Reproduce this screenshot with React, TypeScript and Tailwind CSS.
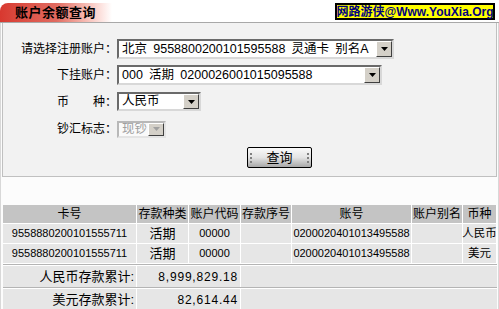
import React from 'react';

function DropArrow({ disabled }: { disabled?: boolean }) {
  return (
    <div className="flex h-full w-[16px] shrink-0 items-center justify-center border border-t-white border-l-white border-b-[#404040] border-r-[#404040] bg-[#d4d0c8]">
      <svg width="7" height="4" viewBox="0 0 7 4">
        <path d="M0 0h7L3.5 4z" fill={disabled ? '#a0a0a0' : '#000'} />
      </svg>
    </div>
  );
}

function FakeSelect({ text, className, disabled }: { text: string; className: string; disabled?: boolean }) {
  return (
    <div
      className={`flex items-stretch border-2 ${
        disabled
          ? 'border-t-[#b8b8b8] border-l-[#b8b8b8] border-b-[#e4e4e4] border-r-[#e4e4e4] bg-[#fafafa] text-[#a0a0a0]'
          : 'border-t-[#6a6a6a] border-l-[#6a6a6a] border-b-[#d8d8d8] border-r-[#d8d8d8] bg-white text-black'
      } ${className}`}
    >
      <div className="flex flex-1 items-center overflow-hidden whitespace-pre pl-[3px] text-[12.5px] leading-none">{text}</div>
      <DropArrow disabled={disabled} />
    </div>
  );
}

const cols = ['w-[134px]', 'w-[52px]', 'w-[52px]', 'w-[51px]', 'w-[120px]', 'w-[51px]', 'w-[34px]'];
const heads = ['卡号', '存款种类', '账户代码', '存款序号', '账号', '账户别名', '币种'];

const rows = [
  ['9558880200101555711', '活期', '00000', '', '0200020401013495588', '', '人民币'],
  ['9558880200101555711', '活期', '00000', '', '0200020401013495588', '', '美元'],
];

const totals = [
  ['人民币存款累计:', '8,999,829.18'],
  ['美元存款累计:', '82,614.44'],
];

export default function App() {
  return (
    <div className="relative h-[309px] w-[499px] overflow-hidden bg-[#fcfcfc] font-['Liberation_Sans','Noto_Sans_CJK_SC',sans-serif] text-[12px] text-black">
      {/* title bar */}
      <div className="flex h-[23px] items-end justify-between border-b border-[#a8a8a8] bg-white">
        <div className="flex h-[19px] w-[112px] items-center rounded-tl-[8px] bg-gradient-to-r from-[#d8382f] via-[#e06a60] to-white pl-[15px]">
          <span className="text-[13px] font-bold leading-none tracking-[0.5px] text-black">账户余额查询</span>
        </div>
        <div className="mb-[2px] mr-[4px] flex h-[17px] w-[160px] items-center justify-center whitespace-nowrap border-2 border-black bg-[#ffff00] text-[12px] font-bold leading-none text-[#000080]">
          网路游侠@Www.YouXia.Org
        </div>
      </div>

      <div className="border-l border-r border-[#d8d8d8]">
        {/* form panel */}
        <div className="mx-px border-x border-b border-[#c0c0c0] bg-[#f2f2f2] pb-[8px] pt-[16px]">
          <div className="grid grid-cols-[114px_1fr] items-center">
            <div className="text-right">请选择注册账户：</div>
            <FakeSelect className="h-[20px] w-[277px]" text={'北京\u20029558800200101595588\u2002灵通卡\u2002别名A'} />
          </div>
          <div className="mt-[6px] grid grid-cols-[114px_1fr] items-center">
            <div className="text-right">下挂账户：</div>
            <FakeSelect className="h-[20px] w-[265px]" text={'000\u2002活期\u20020200026001015095588'} />
          </div>
          <div className="mt-[7px] grid grid-cols-[114px_1fr] items-center">
            <div className="text-right">币　　种：</div>
            <FakeSelect className="h-[19px] w-[84px]" text="人民币" />
          </div>
          <div className="mt-[9px] grid grid-cols-[114px_1fr] items-center">
            <div className="text-right">钞汇标志：</div>
            <FakeSelect className="h-[17px] w-[49px]" text="现钞" disabled />
          </div>
          <div className="mt-[9px] flex pl-[244px]">
            <button className="flex h-[21px] w-[65px] items-center justify-between rounded-[2px] border border-black bg-gradient-to-b from-[#fafafa] via-[#e4e4e4] to-[#a8a8a8] px-[2px]">
              <span className="flex flex-col gap-[2px]">
                <i className="block h-[2px] w-[2px] bg-[#808080]" />
                <i className="block h-[2px] w-[2px] bg-[#808080]" />
                <i className="block h-[2px] w-[2px] bg-[#808080]" />
              </span>
              <span className="text-[13px] leading-none">查询</span>
              <span className="flex flex-col gap-[2px]">
                <i className="block h-[2px] w-[2px] bg-[#808080]" />
                <i className="block h-[2px] w-[2px] bg-[#808080]" />
                <i className="block h-[2px] w-[2px] bg-[#808080]" />
              </span>
            </button>
          </div>
        </div>

        <div className="h-[28px]" />

        {/* results */}
        <div className="ml-[2px] w-[494px]">
          <div className="flex h-[19px] border-b border-white bg-[#c4c4c4]">
            {heads.map((h, i) => (
              <div key={i} className={`${cols[i]} flex items-center justify-center overflow-hidden whitespace-nowrap border-r border-white text-[12px] leading-none`}>
                {h}
              </div>
            ))}
          </div>
          {rows.map((r, ri) => (
            <div key={ri} className="flex h-[20px] border-b border-white bg-[#e6e6e6]">
              {r.map((c, i) => (
                <div
                  key={i}
                  className={`${cols[i]} flex items-center justify-center whitespace-nowrap border-r border-white leading-none ${
                    /^\d+$/.test(c) ? 'text-[11px]' : i === 6 ? 'text-[11.5px]' : 'text-[13px]'
                  } ${i === 6 ? 'overflow-visible' : 'overflow-hidden'}`}
                >
                  {c}
                </div>
              ))}
            </div>
          ))}
          {totals.map((t, ti) => (
            <div key={ti} className="flex h-[23px] border-t border-[#b4b4b4] bg-[#e6e6e6]">
              <div className="flex w-[134px] items-center justify-end border-t border-r border-white pr-[2px] text-[13px] leading-none">{t[0]}</div>
              <div className="flex w-[104px] items-center justify-end border-t border-r border-white pr-[2px] text-[12px] leading-none tracking-[0.8px]">{t[1]}</div>
              <div className="flex-1 border-t border-white" />
            </div>
          ))}
        </div>
      </div>
    </div>
  );
}
